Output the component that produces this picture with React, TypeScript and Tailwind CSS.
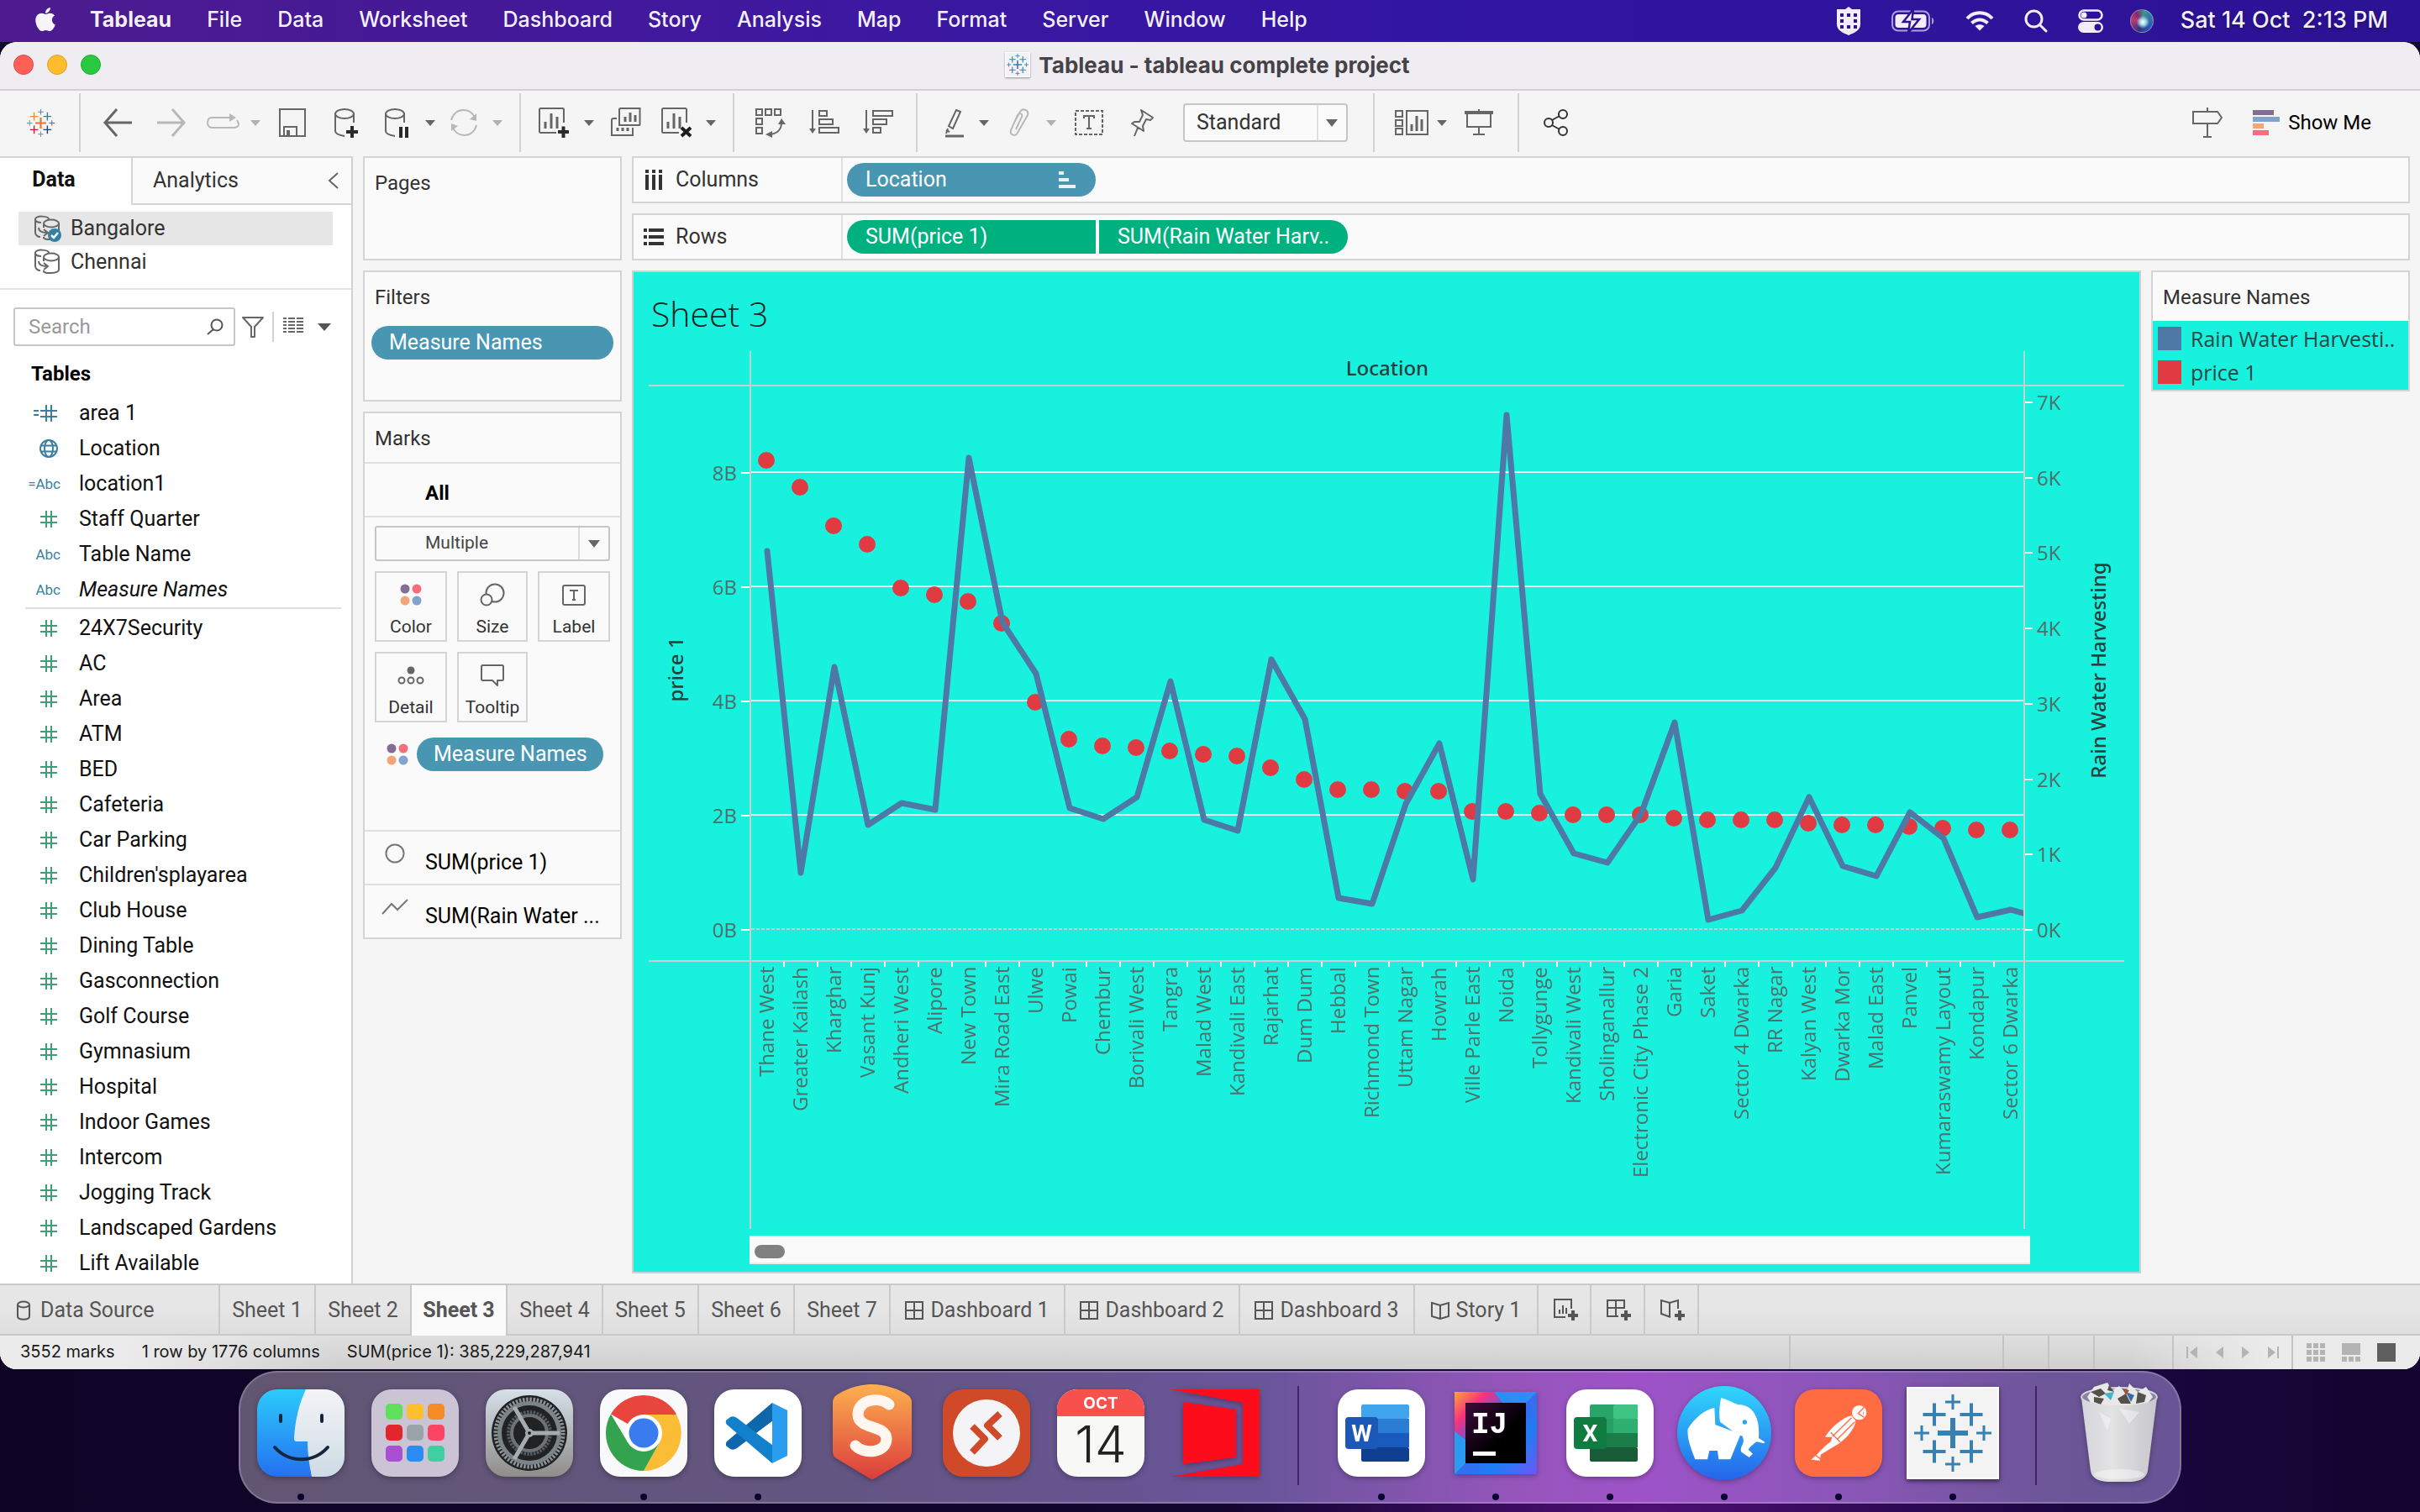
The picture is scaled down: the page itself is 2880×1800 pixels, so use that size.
import React from 'react';
import { FaApple } from 'react-icons/fa';

const UI = "font-['Roboto','Liberation_Sans',sans-serif]";
const MAC = "font-['Inter','Liberation_Sans',sans-serif]";
const VIZ = "font-['Open_Sans','Noto_Sans',sans-serif]";

/* ---------- data ---------- */

const menus = ['File', 'Data', 'Worksheet', 'Dashboard', 'Story', 'Analysis', 'Map', 'Format', 'Server', 'Window', 'Help'];

type Kind = 'num' | 'calcNum' | 'abc' | 'calcAbc' | 'geo';
const dimensions: { kind: Kind; name: string; italic?: boolean; green?: boolean }[] = [
  { kind: 'calcNum', name: 'area 1' },
  { kind: 'geo', name: 'Location' },
  { kind: 'calcAbc', name: 'location1' },
  { kind: 'num', name: 'Staff Quarter', green: true },
  { kind: 'abc', name: 'Table Name' },
  { kind: 'abc', name: 'Measure Names', italic: true },
];
const measures = [
  '24X7Security', 'AC', 'Area', 'ATM', 'BED', 'Cafeteria', 'Car Parking', "Children'splayarea", 'Club House',
  'Dining Table', 'Gasconnection', 'Golf Course', 'Gymnasium', 'Hospital', 'Indoor Games', 'Intercom',
  'Jogging Track', 'Landscaped Gardens', 'Lift Available',
];

const locations = [
  'Thane West', 'Greater Kailash', 'Kharghar', 'Vasant Kunj', 'Andheri West', 'Alipore', 'New Town', 'Mira Road East',
  'Ulwe', 'Powai', 'Chembur', 'Borivali West', 'Tangra', 'Malad West', 'Kandivali East', 'Rajarhat', 'Dum Dum', 'Hebbal',
  'Richmond Town', 'Uttam Nagar', 'Howrah', 'Ville Parle East', 'Noida', 'Tollygunge', 'Kandivali West',
  'Sholinganallur', 'Electronic City Phase 2', 'Garia', 'Saket', 'Sector 4 Dwarka', 'RR Nagar', 'Kalyan West',
  'Dwarka Mor', 'Malad East', 'Panvel', 'Kumaraswamy Layout', 'Kondapur', 'Sector 6 Dwarka',
];
const priceY = [
  88, 120, 166, 188, 240, 248, 256, 282, 376, 420, 428, 430, 434, 438, 440, 454, 468, 480, 480, 482, 482, 506, 506, 508,
  510, 510, 510, 514, 516, 516, 516, 520, 522, 522, 524, 526, 528, 528,
];
const rainY = [
  196, 579, 334, 522, 496, 504, 85, 281, 342, 502, 515, 489, 351, 516, 529, 325, 396, 609, 616, 497, 425, 587, 34, 485,
  556, 567, 509, 400, 635, 624, 573, 489, 571, 583, 507, 538, 632, 623, 634,
];

const sheetTabs = ['Sheet 1', 'Sheet 2', 'Sheet 3', 'Sheet 4', 'Sheet 5', 'Sheet 6', 'Sheet 7'];
const dashTabs = ['Dashboard 1', 'Dashboard 2', 'Dashboard 3'];

/* ---------- small icons ---------- */

function Svg({ children, w = 36, h = 36, vb, className = '' }: { children: React.ReactNode; w?: number; h?: number; vb?: string; className?: string }) {
  return (
    <svg width={w} height={h} viewBox={vb ?? `0 0 ${w} ${h}`} fill="none" stroke="currentColor" strokeWidth={2} className={`shrink-0 ${className}`} aria-hidden="true">
      {children}
    </svg>
  );
}

function Caret({ className = '' }: { className?: string }) {
  return (
    <svg width="12" height="8" viewBox="0 0 12 8" className={`shrink-0 fill-current ${className}`} aria-hidden="true">
      <path d="M0 1H12L6 8Z" />
    </svg>
  );
}

function Plus({ x, y, l, t, c }: { x: number; y: number; l: number; t: number; c: string }) {
  return <path d={`M${x - l / 2} ${y}H${x + l / 2}M${x} ${y - l / 2}V${y + l / 2}`} stroke={c} strokeWidth={t} fill="none" />;
}

function TableauMark({ size, colors }: { size: number; colors: string[] }) {
  const [m, tl, tr, bl, br, t, b, l, r] = colors;
  return (
    <svg width={size} height={size} viewBox="-46 -46 92 92" className="shrink-0" aria-hidden="true">
      <Plus x={0} y={0} l={36} t={6} c={m} />
      <Plus x={-22} y={-22} l={27} t={4} c={tl} />
      <Plus x={22} y={-22} l={27} t={4} c={tr} />
      <Plus x={-22} y={22} l={27} t={4} c={bl} />
      <Plus x={22} y={22} l={27} t={4} c={br} />
      <Plus x={0} y={-37} l={18} t={3} c={t} />
      <Plus x={0} y={37} l={18} t={3} c={b} />
      <Plus x={-37} y={0} l={18} t={3} c={l} />
      <Plus x={37} y={0} l={18} t={3} c={r} />
    </svg>
  );
}
const blueMark = Array(9).fill('#3681b2') as string[];

function Hash({ green, calc }: { green?: boolean; calc?: boolean }) {
  return (
    <svg width="32" height="24" viewBox="0 0 32 24" fill="none" strokeWidth="2" className={green ? 'stroke-[#3f9d78]' : 'stroke-[#3a7f9f]'} aria-hidden="true">
      {calc && <path d="M0 9H6M0 14H6" />}
      <path d="M8 9H28M8 16H28M15 2V22M21 2V22" />
    </svg>
  );
}

function FieldIcon({ kind, green }: { kind: Kind; green?: boolean }) {
  if (kind === 'num' || kind === 'calcNum') return <Hash green={green} calc={kind === 'calcNum'} />;
  if (kind === 'geo')
    return (
      <svg width="32" height="24" viewBox="0 0 32 24" fill="none" strokeWidth="2" className="stroke-[#3a7f9f]" aria-hidden="true">
        <circle cx="18" cy="12" r="10" />
        <ellipse cx="18" cy="12" rx="5" ry="10" />
        <path d="M9 8.500H27M9 15.500H27" />
      </svg>
    );
  return <span className="text-[17px] leading-6 text-[#3a7f9f]">{kind === 'calcAbc' ? '=Abc' : 'Abc'}</span>;
}

function ColorDots({ size }: { size: number }) {
  return (
    <svg width={size} height={size} viewBox="0 0 26 26" aria-hidden="true">
      <circle cx="6" cy="6" r="5.500" fill="#846c94" />
      <circle cx="20" cy="6" r="5.500" fill="#f76d7c" />
      <circle cx="6" cy="20" r="5.500" fill="#f2a57a" />
      <circle cx="20" cy="20" r="5.500" fill="#82a3cb" />
    </svg>
  );
}

function ChartBox({ badge }: { badge?: React.ReactNode }) {
  return (
    <Svg>
      <path d="M21 30H2.500Q1 30 1 28.500V2.500Q1 1 2.500 1H28.500Q30 1 30 2.500V18" />
      <path d="M8 17V25M15 7V25M22 11V25" strokeWidth="3" />
      {badge}
    </Svg>
  );
}

/* ---------- menu bar ---------- */

function MenuBar() {
  return (
    <header className={`${MAC} flex h-[50px] shrink-0 items-center bg-[linear-gradient(90deg,#4d1b8e,#3d18a0_35%,#3115a3_60%,#2c1294)] px-[38px] text-[25px] font-medium text-white/95 [text-shadow:0_2px_4px_rgba(0,0,0,0.3)]`}>
      <button aria-label="Apple menu" className="pb-1"><FaApple className="size-[32px]" /></button>
      <nav className="ml-[37px] flex items-center gap-[42px] pb-0.5">
        <button className="font-bold">Tableau</button>
        {menus.map((m) => <button key={m}>{m}</button>)}
      </nav>
      <div className="ml-auto flex items-center">
        <svg width="30" height="34" viewBox="0 0 30 34" aria-hidden="true">
          <path d="M15 0L19 3H29V21C29 28 22 31 15 34C8 31 1 28 1 21V3H11Z" fill="#f1edfa" />
          <path d="M5 8H9V12H5ZM13 8H17V12H13ZM21 8H25V12H21ZM5 15H9V19H5ZM21 15H25V19H21ZM5 22H9V26H5ZM13 22H17V26H13ZM21 22H25V26H21Z" fill="#2d1298" />
        </svg>
        <svg width="52" height="26" viewBox="0 0 52 26" fill="none" className="ml-9" aria-hidden="true">
          <rect x="1" y="1.500" width="44" height="23" rx="7" stroke="#fff" strokeOpacity=".6" strokeWidth="2" />
          <rect x="4.500" y="5" width="37" height="16" rx="4" fill="#f1edfa" />
          <path d="M48 9V17C51 16 51 10 48 9Z" fill="#fff" fillOpacity=".6" />
          <path d="M26 -1L14 14H22L20 27L33 11H24.500Z" fill="#f1edfa" stroke="#2d1298" strokeWidth="2.500" />
        </svg>
        <svg width="34" height="24" viewBox="0 0 34 24" fill="none" stroke="#f1edfa" strokeWidth="4" className="ml-9" aria-hidden="true">
          <path d="M2 9C10 0 24 0 32 9" />
          <path d="M7.500 14.500C13 9 21 9 26.500 14.500" />
          <path d="M17 23.500L11.500 18C14.500 15.500 19.500 15.500 22.500 18Z" fill="#f1edfa" stroke="none" />
        </svg>
        <svg width="28" height="28" viewBox="0 0 28 28" fill="none" stroke="#f1edfa" strokeWidth="3" strokeLinecap="round" className="ml-9" aria-hidden="true">
          <circle cx="11.500" cy="11.500" r="9.500" />
          <path d="M19 19L26 26" />
        </svg>
        <svg width="30" height="28" viewBox="0 0 30 28" fill="none" className="ml-9" aria-hidden="true">
          <rect x="1.500" y="1.500" width="27" height="11" rx="5.500" stroke="#f1edfa" strokeWidth="2.500" />
          <circle cx="7" cy="7" r="3.500" fill="#f1edfa" />
          <rect x="0" y="15" width="30" height="13" rx="6.500" fill="#f1edfa" />
          <circle cx="23.500" cy="21.500" r="4" fill="#2d1298" />
        </svg>
        <span className="ml-8 size-[28px] rounded-full border border-white/30 bg-[radial-gradient(circle_at_55%_55%,#ffffff_0,#9bd8e8_18%,transparent_38%),conic-gradient(from_20deg,#3a8f9a,#2b55b8_30%,#37357f_50%,#c0396f_72%,#7b2b6f_85%,#3f9f86)]" />
        <span className="ml-8 pb-0.5 text-[27px] whitespace-pre">Sat 14 Oct  2:13 PM</span>
      </div>
    </header>
  );
}

/* ---------- title bar and toolbar ---------- */

function TitleBar() {
  return (
    <div className={`${MAC} relative flex h-[58px] shrink-0 items-center justify-center border-b-2 border-[#d2d0d5] bg-[#efedf2] pr-1.5 pb-0.5`}>
      <div className="absolute left-4 flex gap-4">
        <button aria-label="Close" className="size-6 rounded-full border border-[#e2463f] bg-[#fe5f57]" />
        <button aria-label="Minimize" className="size-6 rounded-full border border-[#dfa023] bg-[#febc2e]" />
        <button aria-label="Zoom" className="size-6 rounded-full border border-[#1dad2b] bg-[#28c840]" />
      </div>
      <span className="mr-2.5 flex size-[30px] items-center justify-center border border-white bg-[#f3f3f4] shadow-[0_1px_2px_rgba(0,0,0,0.4)]">
        <TableauMark size={26} colors={blueMark} />
      </span>
      <h1 className="text-[26px] font-bold text-[#454347]">Tableau - tableau complete project</h1>
    </div>
  );
}

function Sep({ className }: { className: string }) {
  return <div className={`h-[70px] w-0.5 shrink-0 bg-[#d2d2d2] ${className}`} />;
}
function Tool({ label, className, children }: { label: string; className: string; children: React.ReactNode }) {
  return <button aria-label={label} className={`shrink-0 ${className}`}>{children}</button>;
}

const Cylinder = (
  <>
    <path d="M5 7V28C5 31 10 33 16 34M27 7V18" />
    <ellipse cx="16" cy="7.500" rx="11" ry="5.500" />
  </>
);

function Toolbar() {
  return (
    <div className="flex h-[78px] shrink-0 items-center bg-[#f5f5f5] pb-0.5 text-[#666]">
      <Tool label="Start page" className="ml-8">
        <TableauMark size={33} colors={['#eb762c', '#eb912b', '#3f7f94', '#c72035', '#1f447e', '#5b879b', '#7a8fb5', '#6b9bb0', '#59729e']} />
      </Tool>
      <Sep className="ml-[29px]" />
      <Tool label="Back" className="ml-[26px]"><Svg><path d="M17 2L3 18L17 34M3 18H35" strokeWidth="3" /></Svg></Tool>
      <Tool label="Forward" className="ml-7 text-[#b8b8b8]"><Svg><path d="M19 2L33 18L19 34M33 18H1" strokeWidth="3" /></Svg></Tool>
      <Tool label="Redo" className="ml-6 text-[#b8b8b8]">
        <Svg w={40}><path d="M36 15Q41 23 33 24H6Q-1 23 2 14Q3 12 6 12H31" /><path d="M27 7L35 12L27 17Z" fill="currentColor" stroke="none" /></Svg>
      </Tool>
      <Caret className="ml-3 text-[#b0b0b0]" />
      <Tool label="Save" className="ml-5">
        <Svg><path d="M3 2H33V34H3ZM8 34V23H23V34M12 34V28H14V34" /></Svg>
      </Tool>
      <Tool label="New data source" className="ml-7"><Svg>{Cylinder}<path d="M18 29H32M25 22V36" stroke="#2b2b2b" strokeWidth="4" /></Svg></Tool>
      <Tool label="Pause auto updates" className="ml-6"><Svg>{Cylinder}<path d="M23 23V36M30 23V36" stroke="#2b2b2b" strokeWidth="4" /></Svg></Tool>
      <Caret className="ml-4" />
      <Tool label="Run update" className="ml-4 text-[#b8b8b8]">
        <Svg>
          <path d="M3 15C5 7 11 3 17 3C24 3 29 7 31 12M33 21C31 29 25 33 19 33C12 33 7 29 5 24" />
          <path d="M33 7V16L25 14ZM3 28V19L11 22Z" fill="currentColor" stroke="none" />
        </Svg>
      </Tool>
      <Caret className="ml-4 text-[#b0b0b0]" />
      <Sep className="ml-5" />
      <Tool label="New worksheet" className="ml-[21px]"><ChartBox badge={<path d="M23 29H36M29.500 22.500V36" stroke="#2b2b2b" strokeWidth="4" />} /></Tool>
      <Caret className="ml-[18px]" />
      <Tool label="Duplicate" className="ml-5">
        <Svg>
          <path d="M10 2.500Q10 1 11.500 1H34.500V20.500Q34.500 21 33 21H10ZM7 13H3Q1 13 1 15V33H26V24" />
          <path d="M17 11V17M23 6V17M29 9V17M8 24V28M14 24V28M20 24V28" strokeWidth="3" />
        </Svg>
      </Tool>
      <Tool label="Clear sheet" className="ml-6"><ChartBox badge={<path d="M24 24L35 34M35 24L24 34" stroke="#1d1d1d" strokeWidth="4" />} /></Tool>
      <Caret className="ml-[17px]" />
      <Sep className="ml-5" />
      <Tool label="Swap rows and columns" className="ml-[25px]">
        <Svg>
          <path d="M1 2H8V9H1ZM12 2H19V9H12ZM23 2H30V9H23ZM1 13H8V20H1ZM1 24H8V31H1Z" />
          <path d="M31 18C31 26 26 31 18 32" />
          <path d="M31 13L27 20H36ZM12 32L20 28V36Z" fill="currentColor" stroke="none" />
        </Svg>
      </Tool>
      <Tool label="Sort ascending" className="ml-7">
        <Svg><path d="M4 3V29M12 4H21V10H12ZM12 14H28V20H12ZM12 24H35V30H12Z" /><path d="M0 25H8L4 31Z" fill="currentColor" stroke="none" /></Svg>
      </Tool>
      <Tool label="Sort descending" className="ml-7">
        <Svg><path d="M4 3V29M12 4H35V10H12ZM12 14H28V20H12ZM12 24H21V30H12Z" /><path d="M0 25H8L4 31Z" fill="currentColor" stroke="none" /></Svg>
      </Tool>
      <Sep className="ml-[27px]" />
      <Tool label="Highlight" className="ml-[26px]">
        <Svg><path d="M20 3L25 5L16 25L11 22Z" /><path d="M8 27L12 29M8 31L10 25" /><path d="M7 34H29" strokeWidth="3" /></Svg>
      </Tool>
      <Caret className="ml-[11px]" />
      <Tool label="Group members" className="ml-[18px] text-[#b8b8b8]">
        <Svg><path d="M14 26L21 11C23 7 17 6 16 9L8 27C6 33 14 35 16 30L28 9C30 3 22 0 19 5L12 18" /></Svg>
      </Tool>
      <Caret className="ml-[14px] text-[#b0b0b0]" />
      <Tool label="Show mark labels" className="ml-[21px]">
        <Svg><rect x="2" y="4" width="32" height="28" strokeDasharray="4 2" /><path d="M12 13V10H24V13M18 10V25M15 25H21" /></Svg>
      </Tool>
      <Tool label="Fix axes" className="ml-[27px]">
        <Svg><path d="M17 3L31 12L28 15L23 14L19 22L20 28L6 19L9 17L15 17L19 9ZM13 24L9 34" strokeLinejoin="round" /></Svg>
      </Tool>
      <div className="relative ml-[31px] flex h-[46px] w-[196px] items-center">
        <select aria-label="Fit" className={`${UI} h-full w-full appearance-none rounded-[4px] border-2 border-[#c6c6c6] bg-[#fafafa] pl-3.5 text-[25px] text-[#333]`}>
          <option>Standard</option>
          <option>Fit Width</option>
          <option>Entire View</option>
        </select>
        <span className="pointer-events-none absolute right-[35px] h-[42px] w-0.5 bg-[#e0e0e0]" />
        <svg width="14" height="9" viewBox="0 0 14 9" className="pointer-events-none absolute right-3 fill-[#666]" aria-hidden="true"><path d="M0 0H14L7 9Z" /></svg>
      </div>
      <Sep className="ml-[30px]" />
      <Tool label="Show cards" className="ml-6">
        <Svg w={40}><path d="M1 4H9V11H1ZM1 15H9V22H1ZM1 25H9V32H1ZM14 4H39V32H14Z" /><path d="M20 20V28M26 10V28M32 14V28" strokeWidth="3" /></Svg>
      </Tool>
      <Caret className="ml-2.5" />
      <Tool label="Presentation mode" className="ml-5">
        <Svg><path d="M18 2V6M4 8V23H32V8M18 23V32M11 32H25" /><path d="M1 6H35" strokeWidth="4" /></Svg>
      </Tool>
      <Sep className="ml-7" />
      <Tool label="Share" className="ml-[26px] text-[#333]">
        <Svg><circle cx="9" cy="18" r="5" /><circle cx="26" cy="8" r="5" /><circle cx="26" cy="28" r="5" /><path d="M13 15L22 10M13 21L22 26" /></Svg>
      </Tool>
      <Tool label="Data guide" className="ml-auto">
        <Svg><path d="M18 0V5M1 5H30L35 12L30 19H1ZM18 19V35M13 35H23" /></Svg>
      </Tool>
      <button className={`${UI} mr-[58px] ml-9 flex items-center gap-2.5 text-[24px] text-black`}>
        <svg width="32" height="30" viewBox="0 0 32 30" aria-hidden="true">
          <path d="M0 0H25V6H0Z" fill="#846c94" /><path d="M0 8H32V14H0Z" fill="#82a3cb" />
          <path d="M0 16H13V22H0Z" fill="#f2a57a" /><path d="M0 24H19V30H0Z" fill="#f76d7c" />
        </svg>
        Show Me
      </button>
    </div>
  );
}

/* ---------- data pane ---------- */

function SourceIcon({ active }: { active?: boolean }) {
  return (
    <svg width="34" height="34" viewBox="0 0 34 34" fill="none" stroke="#666" strokeWidth="2" aria-hidden="true">
      <path d="M18 6C18 2 2 1 2 6V22C2 25 5 27 8 27M2 7C3 9 6 10 9 10M6 16C6 20 9 22 16 22M12 18L17 22L12 26" />
      <ellipse cx="21" cy="11" rx="9" ry="4.500" />
      <path d="M12 11V16M30 11V26C30 31 12 31 12 28V27" />
      {active && <><circle cx="25" cy="25" r="8" fill="#3580a5" stroke="none" /><path d="M21 25L24 28L29 22" stroke="#fff" strokeWidth="2.500" /></>}
    </svg>
  );
}

function FieldRow({ kind, name, italic, green }: { kind: Kind; name: string; italic?: boolean; green?: boolean }) {
  return (
    <li className="flex h-[42px] items-center">
      <span className="flex w-[72px] shrink-0 justify-end"><FieldIcon kind={kind} green={green} /></span>
      <span className={italic ? 'ml-[22px] italic' : 'ml-[22px]'}>{name}</span>
    </li>
  );
}

function DataPane() {
  return (
    <aside className={`${UI} flex w-[420px] shrink-0 flex-col border-r-2 border-[#d2d2d2] bg-white text-[25px] text-[#111]`}>
      <div className="flex h-[58px] shrink-0">
        <button className="w-[156px] border-t-2 border-[#d4d4d4] pr-7 pb-1 text-[25px] font-bold">Data</button>
        <div className="flex flex-1 items-center border-2 border-r-0 border-[#d4d4d4] bg-[#fafafa]">
          <button className="ml-6 text-[25px] text-[#333]">Analytics</button>
          <button aria-label="Collapse pane" className="mr-3.5 ml-auto text-[#666]">
            <Svg w={14} h={20}><path d="M12 1L2 10L12 19" /></Svg>
          </button>
        </div>
      </div>
      <ul className="border-b-2 border-[#e4e4e4] pt-2 pb-[11px] text-[#333]">
        <li className="mx-[22px] flex h-10 items-center gap-2.5 bg-[#e6e6e6] pl-[18px]"><SourceIcon active />Bangalore</li>
        <li className="mx-[22px] flex h-10 items-center gap-2.5 pl-[18px]"><SourceIcon />Chennai</li>
      </ul>
      <div className="mt-[21px] flex items-center pl-4">
        <div className="flex h-[46px] w-[264px] items-center rounded-[3px] border-2 border-[#c6c6c6] pr-3 pl-4">
          <input aria-label="Search fields" placeholder="Search" className="w-full min-w-0 bg-transparent text-[24px] outline-none placeholder:text-[#999]" />
          <Svg w={20} h={20} className="text-[#555]"><circle cx="12" cy="8" r="6.500" /><path d="M8 13L1 19" /></Svg>
        </div>
        <button aria-label="Filter" className="ml-2 text-[#666]"><Svg w={26} h={26}><path d="M1 2H25L15 13V25H11V13Z" strokeLinejoin="round" /></Svg></button>
        <span className="mx-2.5 h-9 w-0.5 bg-[#d2d2d2]" />
        <button aria-label="View as list" className="pb-1 text-[#666]"><Svg w={26} h={20}><path d="M1 2H25M1 6H25M1 10H25M1 14H25M1 18H25" strokeDasharray="4 2 8 2 8 2" /></Svg></button>
        <button aria-label="More" className="ml-4 text-[#555]"><svg width="16" height="9" viewBox="0 0 16 9" className="fill-current"><path d="M0 0H16L8 9Z" /></svg></button>
      </div>
      <h2 className="h-[59px] shrink-0 pt-[18px] pl-[37px] text-[24px] leading-[30px] font-bold text-black">Tables</h2>
      <ul>{dimensions.map((f) => <FieldRow key={f.name} {...f} />)}</ul>
      <hr className="mr-3 mb-0.5 ml-[30px] border-t-2 border-[#e0e0e0]" />
      <ul>{measures.map((m) => <FieldRow key={m} kind="num" name={m} green />)}</ul>
    </aside>
  );
}

/* ---------- cards ---------- */

const card = 'border-2 border-[#d4d4d4] bg-[#fafafa]';
const pill = 'flex h-10 items-center rounded-full bg-[#4996b2] text-[25px] text-white';

function MarkButton({ label, children }: { label: string; children: React.ReactNode }) {
  return (
    <button className="flex h-[84px] flex-col items-center justify-between border-2 border-[#d4d4d4] pt-2.5 text-[21px] leading-8 text-[#333]">
      <span className="flex size-8 items-center justify-center text-[#666]">{children}</span>
      {label}
    </button>
  );
}

function Cards() {
  return (
    <div className={`${UI} flex w-[308px] shrink-0 flex-col gap-3 text-[24px] text-[#333]`}>
      <section className={`${card} h-[124px] pt-3 pl-3`}><h2>Pages</h2></section>
      <section className={`${card} h-[156px] pt-3 pl-2`}>
        <h2 className="pl-1">Filters</h2>
        <div className={`${pill} mt-4 w-[288px] pl-[21px]`}>Measure Names</div>
      </section>
      <section className={card}>
        <h2 className="h-[60px] border-b-2 border-[#e0e0e0] pt-3 pl-3">Marks</h2>
        <h3 className="flex h-16 items-center border-b-2 border-[#e0e0e0] pt-2 pl-[72px] font-bold text-black">All</h3>
        <div className="h-[372px] px-3 pt-2.5">
          <div className="relative flex h-[42px] items-center">
            <select aria-label="Mark type" className="h-full w-full appearance-none rounded-[3px] border-2 border-[#c6c6c6] pl-[58px] text-[21px] text-[#444]">
              <option>Multiple</option>
            </select>
            <span className="pointer-events-none absolute right-9 h-[38px] w-0.5 bg-[#dcdcdc]" />
            <svg width="14" height="9" viewBox="0 0 14 9" className="pointer-events-none absolute right-3 fill-[#666]" aria-hidden="true"><path d="M0 0H14L7 9Z" /></svg>
          </div>
          <div className="mt-3 grid grid-cols-[86px_84px_86px] gap-x-3 gap-y-3">
            <MarkButton label="Color"><ColorDots size={26} /></MarkButton>
            <MarkButton label="Size"><Svg w={30} h={28}><circle cx="18" cy="12" r="10.500" /><circle cx="8" cy="20" r="6.500" fill="#fafafa" /></Svg></MarkButton>
            <MarkButton label="Label"><Svg w={28} h={26}><rect x="1" y="2" width="26" height="23" rx="2" /><path d="M10 9V8H18V9M14 8V19M12 19H16" /></Svg></MarkButton>
            <MarkButton label="Detail">
              <Svg w={32} h={24}><circle cx="16" cy="6" r="4.500" fill="currentColor" stroke="none" /><circle cx="5" cy="18" r="3.500" /><circle cx="16" cy="18" r="3.500" /><circle cx="27" cy="18" r="3.500" /></Svg>
            </MarkButton>
            <MarkButton label="Tooltip"><Svg w={28} h={28}><path d="M2.500 2H25.500Q27 2 27 3.500V18.500Q27 20 25.500 20H20V26L14 20H2.500Q1 20 1 18.500V3.500Q1 2 2.500 2Z" strokeLinejoin="round" /></Svg></MarkButton>
          </div>
          <div className="mt-[18px] flex items-center gap-2.5 pl-3.5">
            <ColorDots size={26} />
            <div className={`${pill} w-[222px] pl-5`}>Measure Names</div>
          </div>
        </div>
        <div className="flex h-16 items-center border-t-2 border-[#e0e0e0] pl-6 text-[25px] text-black">
          <Svg w={24} h={24} className="mb-2.5 text-[#777]"><circle cx="12" cy="12" r="10.500" /></Svg>
          <span className="ml-6 pt-3">SUM(price 1)</span>
        </div>
        <div className="flex h-16 items-center border-t-2 border-[#e0e0e0] pl-5 text-[25px] text-black">
          <Svg w={32} h={20} className="mb-2.5 text-[#777]"><path d="M1 18L12 6L19 13L31 1" /></Svg>
          <span className="ml-5 pt-3">SUM(Rain Water ...</span>
        </div>
      </section>
    </div>
  );
}

function Shelf({ label, icon, children }: { label: string; icon: React.ReactNode; children: React.ReactNode }) {
  return (
    <section className={`${card} flex h-[56px] shrink-0 text-[25px] text-[#333]`}>
      <h2 className="flex w-[249px] shrink-0 items-center gap-3.5 border-r-2 border-[#e0e0e0] pl-3">{icon}{label}</h2>
      <div className="flex items-center gap-1 pl-[5px]">{children}</div>
    </section>
  );
}

/* ---------- visualization ---------- */

function Chart() {
  const line = rainY.map((y, i) => `${19 + i * 40},${y}`).join(' ');
  return (
    <section className={`${VIZ} flex min-w-0 flex-1 flex-col border-2 border-[#d0d0d0] bg-[#18f1dd] px-[18px]`}>
      <h2 className="h-[94px] pt-[22px] pl-[3px] text-[41px] leading-[54px] font-light text-[#1c2423]">Sheet 3</h2>
      <div className="grid grid-cols-[120px_minmax(0,1fr)_118px]">
        <div className="h-[42px] border-b-2 border-[#c9cfce]" />
        <div className="h-[42px] border-x-2 border-b-2 border-[#c9cfce]/90 pt-1 text-center font-['Noto_Sans',sans-serif] text-[24px] leading-8 font-medium text-[#26403d]">Location</div>
        <div className="h-[42px] border-b-2 border-[#c9cfce]" />

        <svg height="683" viewBox="0 0 120 683" width="120" aria-label="price 1 axis" className="font-['Open_Sans',sans-serif]">
          <text transform="translate(41 337) rotate(-90)" textAnchor="middle" className="fill-[#26403d] font-['Noto_Sans',sans-serif] text-[24px] font-medium">price 1</text>
          {['8B', '6B', '4B', '2B', '0B'].map((t, i) => (
            <g key={t}>
              <path d={`M110 ${103 + i * 136}H120`} stroke="#fff" strokeWidth="2" />
              <text x="105" y={112 + i * 136} textAnchor="end" className="fill-[#4f6f6b] text-[24px]">{t}</text>
            </g>
          ))}
        </svg>
        <div className="h-[683px] overflow-hidden border-x-2 border-[#c9cfce]">
          <svg width="1560" height="683" viewBox="0 0 1560 683" fill="none" aria-label="Price and rain water harvesting by location">
            {[102, 238, 374, 510].map((y) => <path key={y} d={`M0 ${y}H1560`} stroke="#effffd" strokeWidth="2" />)}
            <path d="M0 646H1560" stroke="#cbd0cf" strokeWidth="2" strokeDasharray="4 2" />
            {priceY.map((y, i) => <circle key={i} cx={18 + i * 40} cy={y} r="10" fill="#e03b42" />)}
            <polyline points={line} stroke="#4e79a7" strokeWidth="7" strokeLinejoin="round" strokeLinecap="round" />
          </svg>
        </div>
        <svg height="683" viewBox="0 0 118 683" width="118" aria-label="Rain Water Harvesting axis" className="font-['Open_Sans',sans-serif]">
          {['7K', '6K', '5K', '4K', '3K', '2K', '1K', '0K'].map((t, i) => {
            const y = 19 + Math.round(i * 89.7);
            return (
              <g key={t}>
                <path d={`M0 ${y}H9`} stroke="#fff" strokeWidth="2" />
                <text x="14" y={y + 9} className="fill-[#4f6f6b] text-[24px]">{t}</text>
              </g>
            );
          })}
          <text transform="translate(96 338) rotate(-90)" textAnchor="middle" className="fill-[#26403d] font-['Noto_Sans',sans-serif] text-[24px] font-medium">Rain Water Harvesting</text>
        </svg>

        <div className="border-t-2 border-[#c9cfce]" />
        <ol className="flex h-[320px] overflow-hidden border-x-2 border-t-2 border-[#c9cfce]">
          {locations.map((l) => (
            <li key={l} className="w-10 shrink-0">
              <div className="h-1.5 border-r-2 border-white" />
              <div className="flex h-[300px] rotate-180 items-center justify-end pl-1 text-[24px] leading-9 whitespace-nowrap text-[#4f6f6b] [writing-mode:vertical-rl]">
                <span>{l}</span>
              </div>
            </li>
          ))}
        </ol>
        <div className="border-t-2 border-[#c9cfce]" />
      </div>
      <div className="mt-2 mr-[112px] ml-[120px] flex h-[34px] items-center border-y-2 border-[#e9ecec] bg-[#fafafa] pt-1 pl-1.5" role="scrollbar" aria-controls="viz" aria-valuenow={0}>
        <div className="h-4 w-9 rounded-full bg-[#808080]" />
      </div>
    </section>
  );
}

function Legend() {
  return (
    <section className={`${card} ${VIZ} w-[308px] shrink-0 self-start`}>
      <h2 className={`${UI} h-[58px] pt-3 pl-3 text-[24px] text-[#333]`}>Measure Names</h2>
      <ul className="flex h-[82px] flex-col bg-[#18f1dd] pt-px text-[25px] leading-10 text-[#2b4744]">
        <li className="flex h-10 items-center gap-[11px] pl-1.5 whitespace-nowrap"><span className="size-7 bg-[#4e79a7]" />Rain Water Harvesti..</li>
        <li className="flex h-10 items-center gap-[11px] pl-1.5 whitespace-nowrap"><span className="size-7 bg-[#e03b42]" />price 1</li>
      </ul>
    </section>
  );
}

/* ---------- bottom bars ---------- */

const GridGlyph = <path d="M1 1H21V21H1ZM11 1V21M1 11H21" />;
const BookGlyph = <path d="M1 2L11 5L21 2V18L11 21L1 18ZM11 5V21" />;

function TabBar() {
  const tab = 'flex h-[60px] items-center justify-center border-r-2 border-[#c9c9c9]';
  const addBadge = <path d="M17 20H29M23 14V26" strokeWidth="4" />;
  return (
    <nav className={`${UI} flex h-[62px] shrink-0 border-y-2 border-[#c9c9c9] bg-[linear-gradient(180deg,#e6e6e6_40%,#dedede)] text-[25px] text-[#555]`}>
      <button className={`${tab} w-[262px] justify-start gap-3 pl-5`}>
        <Svg w={16} h={24}><ellipse cx="8" cy="5" rx="7" ry="3.500" /><path d="M1 5V19C1 24 15 24 15 19V5" /></Svg>
        Data Source
      </button>
      {sheetTabs.map((t) => (
        <button key={t} className={t === 'Sheet 3' ? `${tab} w-[114px] bg-[#fafafa] font-bold` : `${tab} w-[114px]`}>{t}</button>
      ))}
      {dashTabs.map((t) => (
        <button key={t} className={`${tab} w-[208px] gap-2`}><Svg w={22} h={22}>{GridGlyph}</Svg>{t}</button>
      ))}
      <button className={`${tab} w-[147px] gap-2`}><Svg w={22} h={22}>{BookGlyph}</Svg>Story 1</button>
      <button aria-label="New worksheet" className={`${tab} w-[63px] pl-1`}>
        <Svg w={30} h={28}><path d="M14 22H1V1H21V12" /><path d="M7 13V18M11 8V18M15 11V18" />{addBadge}</Svg>
      </button>
      <button aria-label="New dashboard" className={`${tab} w-16 pl-1`}><Svg w={30} h={28}><path d="M14 21H1V2H21V12M11 2V21M1 11H21" />{addBadge}</Svg></button>
      <button aria-label="New story" className={`${tab} w-16 pl-1`}><Svg w={30} h={28}><path d="M12 22L1 18V2L11 5L21 2V12M11 5V21" />{addBadge}</Svg></button>
    </nav>
  );
}

function StatusBar() {
  const cell = 'h-10 border-l-2 border-[#c4c4c4]';
  return (
    <div className={`${MAC} flex h-10 shrink-0 items-center bg-[linear-gradient(90deg,#ebebeb_5%,transparent_14%,transparent_88%,#ebebeb_94%),linear-gradient(180deg,#dfdfdf,#cfcfcf)] text-[20px] text-[#1a1a1a]`}>
      <p className="flex gap-8 pb-0.5 pl-6"><span>3552 marks</span><span>1 row by 1776 columns</span><span>SUM(price 1): 385,229,287,941</span></p>
      <div className="ml-auto flex">
        <div className={`${cell} w-[254px]`} />
        <div className={`${cell} w-[54px]`} />
        <div className={`${cell} w-[54px]`} />
        <div className={`${cell} w-[94px]`} />
        <div className={`${cell} flex w-[142px] items-center justify-between px-[15px] text-[#b4b4b4]`}>
          <button aria-label="First"><svg width="14" height="14" viewBox="0 0 14 14" className="fill-current"><path d="M0 0H2V14H0ZM13 0V14L4 7Z" /></svg></button>
          <button aria-label="Previous"><svg width="10" height="14" viewBox="0 0 10 14" className="fill-current"><path d="M9 0V14L0 7Z" /></svg></button>
          <button aria-label="Next"><svg width="10" height="14" viewBox="0 0 10 14" className="fill-current"><path d="M1 0V14L10 7Z" /></svg></button>
          <button aria-label="Last"><svg width="14" height="14" viewBox="0 0 14 14" className="fill-current"><path d="M12 0H14V14H12ZM1 0V14L10 7Z" /></svg></button>
        </div>
        <div className={`${cell} flex w-[153px] items-center gap-5 pl-4`}>
          <button aria-label="Sheet sorter">
            <svg width="22" height="22" viewBox="0 0 22 22" fill="#b4b4b4"><path d="M0 0H6V6H0ZM8 0H14V6H8ZM16 0H22V6H16ZM0 8H6V14H0ZM8 8H14V14H8ZM16 8H22V14H16ZM0 16H6V22H0ZM8 16H14V22H8ZM16 16H22V22H16Z" /></svg>
          </button>
          <button aria-label="Filmstrip"><svg width="22" height="22" viewBox="0 0 22 22" fill="#b4b4b4"><path d="M0 0H22V14H0ZM0 16H6V22H0ZM8 16H14V22H8ZM16 16H22V22H16Z" /></svg></button>
          <button aria-label="Tabs"><svg width="22" height="22" viewBox="0 0 22 22" fill="#5f5f5f"><path d="M0 0H22V22H0Z" /></svg></button>
        </div>
      </div>
    </div>
  );
}

/* ---------- dock ---------- */

const Finder = (
  <svg width="104" height="104" viewBox="0 0 104 104" aria-hidden="true">
    <defs>
      <linearGradient id="fb" x1="0" y1="0" x2="0" y2="1"><stop offset="0" stopColor="#2ccbfb" /><stop offset="1" stopColor="#2470f0" /></linearGradient>
      <linearGradient id="fw" x1="0" y1="0" x2="0" y2="1"><stop offset="0" stopColor="#f4f4f6" /><stop offset="1" stopColor="#cddbe6" /></linearGradient>
      <clipPath id="fc"><rect width="104" height="104" rx="24" /></clipPath>
    </defs>
    <g clipPath="url(#fc)">
      <path d="M0 0H104V104H0Z" fill="url(#fb)" />
      <path d="M58 0H104V104H65C62 90 60 76 60 62H47Q44 62 44 59C45 37 50 17 58 0Z" fill="url(#fw)" />
    </g>
    <path d="M28 31V38M77 31V38M21 69C38 88 67 88 84 69" stroke="#14263d" strokeWidth="4" strokeLinecap="round" fill="none" />
  </svg>
);

const padColors = ['#5ee05a', '#fcc02f', '#f68a26', '#e3262b', '#9aa3a8', '#fc4565', '#a94fd3', '#2a8cf4', '#40cfa0'];
const Launchpad = (
  <svg width="104" height="104" viewBox="0 0 104 104" aria-hidden="true">
    <rect width="104" height="104" rx="24" fill="#cac4d4" />
    {padColors.map((c, i) => <rect key={c} x={17 + (i % 3) * 25} y={17 + Math.floor(i / 3) * 25} width="20" height="19" rx="5" fill={c} />)}
  </svg>
);

const Settings = (
  <svg width="104" height="104" viewBox="0 0 104 104" fill="none" aria-hidden="true">
    <defs><linearGradient id="sg" x1="0" y1="0" x2="0" y2="1"><stop offset="0" stopColor="#d5e0e8" /><stop offset="1" stopColor="#8f8d8a" /></linearGradient></defs>
    <rect width="104" height="104" rx="24" fill="url(#sg)" />
    <circle cx="52" cy="52" r="45" fill="#202224" />
    <circle cx="52" cy="52" r="40" stroke="#8d9397" strokeWidth="5" strokeDasharray="2.500 1.690" />
    <circle cx="52" cy="52" r="35.500" stroke="#7d8488" strokeWidth="5" />
    <circle cx="52" cy="52" r="25" stroke="#565b5f" strokeWidth="4" strokeDasharray="2.500 1.430" />
    <circle cx="52" cy="52" r="21" stroke="#6d7377" strokeWidth="4" />
    <path d="M52 52H88M52 52L34 21M52 52L34 83" stroke="#a5abae" strokeWidth="5" />
    <circle cx="52" cy="52" r="5" fill="#a5abae" /><circle cx="52" cy="52" r="2" fill="#202224" />
  </svg>
);

const Chrome = (
  <svg width="104" height="104" viewBox="0 0 104 104" aria-hidden="true">
    <rect width="104" height="104" rx="24" fill="#f9f9fb" />
    <path d="M52 52L13 29.500A45 45 0 0 1 91 29.500Z" fill="#e8453c" />
    <path d="M52 30H91A45 45 0 0 1 52 97L71 63Z" fill="#fbbd36" />
    <path d="M13 29.500A45 45 0 0 0 52 97L71 63L33 63Z" fill="#34a350" />
    <circle cx="52" cy="52" r="22" fill="#fff" />
    <circle cx="52" cy="52" r="17.500" fill="#3a7bef" />
  </svg>
);

const VSCode = (
  <svg width="104" height="104" viewBox="0 0 104 104" aria-hidden="true">
    <rect width="104" height="104" rx="24" fill="#fff" />
    <path d="M69 16L87 25V79L69 88Z" fill="#2a9df0" />
    <path d="M69 16V38L27 70Q23 73 19 71L14 67Q13 64 15 62Z" fill="#0e67ab" />
    <path d="M69 88V66L27 34Q23 31 19 33L14 37Q13 40 15 42Z" fill="#1380cc" />
    <path d="M69 38V66L50 52Z" fill="#fff" />
  </svg>
);

const PinS = (
  <svg width="104" height="116" viewBox="0 0 104 116" aria-hidden="true">
    <defs><linearGradient id="ps" x1="0" y1="0" x2="0" y2="1"><stop offset="0" stopColor="#fdb04f" /><stop offset="1" stopColor="#dc3c3c" /></linearGradient></defs>
    <path d="M52 0C66 0 84 5 96 14Q99 17 99 22V80Q99 85 95 88L55 112Q52 114 49 112L9 88Q5 85 5 80V22Q5 17 8 14C20 5 38 0 52 0Z" fill="url(#ps)" />
    <path d="M72 24C60 14 35 18 35 36C35 54 69 48 69 65C69 82 42 84 32 73" fill="none" stroke="#fff6ef" strokeWidth="13" strokeLinecap="round" />
  </svg>
);

const Remote = (
  <svg width="104" height="104" viewBox="0 0 104 104" fill="none" aria-hidden="true">
    <rect width="104" height="104" rx="24" fill="#d04a2a" />
    <circle cx="52" cy="52" r="40" fill="#f4f4f6" />
    <path d="M35 44L50 59L35 75M68 29L53 43L68 58" stroke="#d04a2a" strokeWidth="8" strokeLinejoin="round" />
  </svg>
);

const CalendarApp = (
  <div className={`${MAC} flex size-[104px] flex-col overflow-hidden rounded-[24px] bg-[#f8f8f6] text-center`}>
    <span className="h-8 bg-[#f8514d] text-[19px] leading-[34px] font-bold text-white">OCT</span>
    <span className="text-[60px] leading-[66px] font-light text-[#222]">14</span>
  </div>
);

const RedDoor = (
  <svg width="106" height="104" viewBox="0 0 106 104" fill="#fd0d1b" aria-hidden="true">
    <path d="M0 0H106V104H0L86 89V16Z" />
    <path d="M15 15L78 24V81L15 89Z" />
  </svg>
);

function OfficeApp({ letter, bars, badge }: { letter: string; bars: string[]; badge: string }) {
  return (
    <svg width="104" height="104" viewBox="0 0 104 104" aria-hidden="true">
      <rect width="104" height="104" rx="24" fill="#fff" />
      {bars.map((c, i) => <rect key={c} x="28" y={18 + i * 17} width="57" height="17" rx={i === 0 || i === 3 ? 2 : 0} fill={c} />)}
      {letter === 'X' && <><rect x="56" y="18" width="29" height="17" rx="2" fill="#3fc484" /><rect x="56" y="35" width="29" height="17" fill="#2fb071" /></>}
      <rect x="9" y="33" width="39" height="38" rx="4" fill={badge} />
      <text x="28.500" y="62" textAnchor="middle" fontSize="28" fontWeight="700" fill="#fff" className={UI}>{letter}</text>
    </svg>
  );
}

const IntelliJ = (
  <svg width="104" height="104" viewBox="0 0 104 104" aria-hidden="true">
    <defs>
      <linearGradient id="ij" x1="0" y1="0" x2="1" y2="1"><stop offset="0" stopColor="#fda43b" /><stop offset=".2" stopColor="#f7317e" /><stop offset=".42" stopColor="#4363f0" /><stop offset=".7" stopColor="#1f7cf5" /><stop offset="1" stopColor="#6a57f5" /></linearGradient>
      <linearGradient id="ik" x1="0" y1="0" x2="1" y2="1"><stop offset="0" stopColor="#3c0a3c" /><stop offset=".6" stopColor="#000" /></linearGradient>
    </defs>
    <rect x="3" y="3" width="98" height="98" fill="url(#ij)" />
    <path d="M101 3L88 16H60L50 3Z" fill="#2d8df5" /><path d="M3 101L16 88V60L3 50Z" fill="#2b9bf0" />
    <rect x="16" y="16" width="72" height="72" fill="url(#ik)" />
    <text x="23" y="52" fontSize="36" fontWeight="700" fill="#fff" className="font-['Liberation_Mono',monospace]">IJ</text>
    <path d="M25 74H52V79H25Z" fill="#fff" />
  </svg>
);

const Elephant = (
  <svg width="112" height="112" viewBox="18 60 336 336" aria-hidden="true">
    <defs><linearGradient id="el" x1="0" y1="0" x2="0" y2="1"><stop offset="0" stopColor="#30d8fc" /><stop offset="1" stopColor="#2563eb" /></linearGradient></defs>
    <circle cx="186" cy="228" r="168" fill="url(#el)" />
    <path d="M56 213C80 175 115 145 151 138L154 198L217 222L171 188C166 160 170 120 175 102C195 108 215 118 235 127C275 125 300 155 307 195C310 215 310 230 309 246L331 260L328 265L302 259C285 270 277 280 272 287L288 302L275 315L250 298C240 290 248 275 254 262C256 248 252 236 243 236L208 322H166L162 291H133L126 322H82C70 290 52 250 56 213Z" fill="#fff" />
    <circle cx="259" cy="189" r="8" fill="#2ba5f4" />
  </svg>
);

const Postman = (
  <svg width="104" height="104" viewBox="438 72 312 312" aria-hidden="true">
    <rect x="438" y="72" width="312" height="312" rx="70" fill="#ff6c41" />
    <circle cx="668" cy="155" r="26" fill="#fff" />
    <path d="M546 242C568 208 608 172 640 166L655 184C655 206 630 240 598 264L530 305L528 326L496 323L518 304C536 284 548 270 567 258L571 242Z" fill="#fff" />
    <path d="M686 136L664 158L686 172M566 226L600 260M572 240L640 174M590 250L652 188M512 308L532 322" fill="none" stroke="#ff6c41" strokeWidth="4" />
    <path d="M682 150Q688 158 682 164Z" fill="#ff6c41" />
  </svg>
);

const TableauApp = (
  <div className="flex size-[110px] items-center justify-center border-2 border-white bg-[#f3f3f3] shadow-[0_2px_4px_rgba(0,0,0,0.35)]">
    <TableauMark size={92} colors={blueMark} />
  </div>
);

const Trash = (
  <svg width="104" height="122" viewBox="0 0 104 122" aria-hidden="true">
    <defs><linearGradient id="tr" x1="0" y1="0" x2="1" y2="0"><stop offset="0" stopColor="#d4d4dc" /><stop offset=".4" stopColor="#e3e3e3" /><stop offset="1" stopColor="#c6c6cc" /></linearGradient></defs>
    <ellipse cx="52" cy="18" rx="45" ry="11" fill="#8a83a5" stroke="#d8d5e2" strokeWidth="2" />
    <path d="M14 18L22 6L38 1L44 10L52 5L60 14L64 2L74 12L84 6L92 18L84 28H20Z" fill="#e8e8e8" />
    <path d="M18 12L30 8L36 14L28 18ZM22 18L34 20L30 27L22 24ZM50 20L60 14L66 26H54ZM74 12L84 16L82 24L72 26ZM40 4L46 12L38 10Z" fill="#55504c" />
    <path d="M34 14L46 12L42 22Z" fill="#3fb7c9" /><path d="M60 12L70 16L66 24Z" fill="#3a6ba8" /><path d="M56 8L64 10L60 16Z" fill="#a7502f" />
    <path d="M7 19C14 31 90 31 97 19L86 106Q84 118 66 119H38Q20 118 18 106Z" fill="url(#tr)" />
    <path d="M28 36L42 44L38 58ZM52 32L76 36L64 50Z" fill="#fff" fillOpacity=".4" />
    <ellipse cx="52" cy="110" rx="30" ry="6" fill="#fff" fillOpacity=".4" />
  </svg>
);

function DockItem({ label, running, children }: { label: string; running?: boolean; children: React.ReactNode }) {
  return (
    <button aria-label={label} className="flex w-[104px] shrink-0 flex-col items-center">
      <span className="flex h-[104px] items-center justify-center drop-shadow-[0_2px_3px_rgba(0,0,0,0.3)]">{children}</span>
      <span className={running ? 'mt-5 size-2 rounded-full bg-[#0a0330]' : 'mt-5 size-2'} />
    </button>
  );
}

function Dock() {
  const rule = <div className="mx-3.5 mb-6 h-[118px] w-0.5 shrink-0 self-center bg-[#3f2470]" />;
  return (
    <footer className="flex h-[170px] shrink-0 justify-center pt-0.5">
      <div className="flex h-[158px] gap-8 rounded-[46px] border-2 border-white/20 bg-[linear-gradient(90deg,#615672,#635583_32%,#6a559b_53%,#9655bc_66%,#9e53c8_72%,#8a56b8_83%,#6d5698_93%,#685496)] px-5 pt-5">
        <DockItem label="Finder" running>{Finder}</DockItem>
        <DockItem label="Launchpad">{Launchpad}</DockItem>
        <DockItem label="System Settings">{Settings}</DockItem>
        <DockItem label="Chrome" running>{Chrome}</DockItem>
        <DockItem label="VS Code" running>{VSCode}</DockItem>
        <DockItem label="S">{PinS}</DockItem>
        <DockItem label="Remote Desktop">{Remote}</DockItem>
        <DockItem label="Calendar">{CalendarApp}</DockItem>
        <DockItem label="Virtual machine">{RedDoor}</DockItem>
        {rule}
        <DockItem label="Word" running><OfficeApp letter="W" badge="#1b58b8" bars={['#41a5ee', '#2b7cd3', '#185abd', '#103f91']} /></DockItem>
        <DockItem label="IntelliJ IDEA" running>{IntelliJ}</DockItem>
        <DockItem label="Excel" running><OfficeApp letter="X" badge="#107c41" bars={['#2aa569', '#27a065', '#1b7d47', '#185c37']} /></DockItem>
        <DockItem label="TablePlus" running>{Elephant}</DockItem>
        <DockItem label="Postman" running>{Postman}</DockItem>
        <DockItem label="Tableau" running>{TableauApp}</DockItem>
        {rule}
        <DockItem label="Trash">{Trash}</DockItem>
      </div>
    </footer>
  );
}

/* ---------- page ---------- */

export default function App() {
  return (
    <div className="flex h-screen w-full flex-col overflow-hidden bg-[radial-gradient(ellipse_500px_170px_at_68%_100%,#4e0f74,transparent),linear-gradient(90deg,#0f0426,#12062f_50%,#1b0642_85%,#14042f)]">
      <MenuBar />
      <main className="flex min-h-0 flex-1 flex-col overflow-hidden rounded-[20px] bg-[#f5f5f5]">
        <TitleBar />
        <Toolbar />
        <div className="flex min-h-0 flex-1 gap-3 overflow-hidden pr-3">
          <DataPane />
          <Cards />
          <div className="flex min-w-0 flex-1 flex-col gap-3 pb-3">
            <div className={`${UI} contents`}>
              <Shelf label="Columns" icon={<Svg w={24} h={24}><path d="M4 0V4M12 0V4M20 0V4M4 6V24M12 6V24M20 6V24" strokeWidth="4" /></Svg>}>
                <div className={`${pill} w-[296px] justify-between pr-6 pl-[22px]`}>
                  Location
                  <svg width="20" height="20" viewBox="0 0 20 20" fill="#e9f3f7" aria-hidden="true"><path d="M0 0H6V4H0ZM0 8H12V12H0ZM0 16H20V20H0Z" /></svg>
                </div>
              </Shelf>
              <Shelf label="Rows" icon={<Svg w={24} h={20}><path d="M0 2H4M0 10H4M0 18H4M6 2H24M6 10H24M6 18H24" strokeWidth="4" /></Svg>}>
                <div className="flex h-10 w-[296px] items-center rounded-l-full bg-[#00b180] pl-[22px] text-[25px] text-white">SUM(price 1)</div>
                <div className="flex h-10 w-[296px] items-center rounded-r-full bg-[#00b180] pl-[22px] text-[25px] text-white">SUM(Rain Water Harv..</div>
              </Shelf>
            </div>
            <div id="viz" className="flex min-h-0 flex-1 gap-3">
              <Chart />
              <Legend />
            </div>
          </div>
        </div>
        <TabBar />
        <StatusBar />
      </main>
      <Dock />
    </div>
  );
}
